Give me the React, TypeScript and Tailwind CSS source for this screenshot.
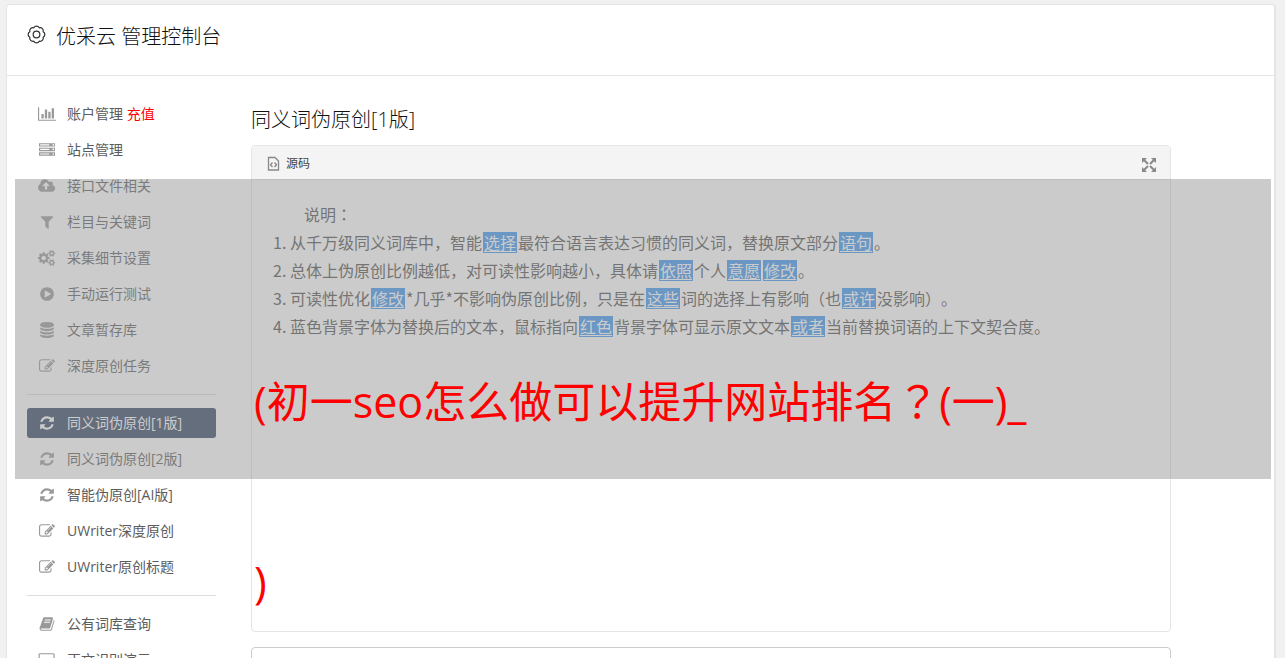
import React from "react";

type IconData = { w: number; d: string };

const icons: Record<string, IconData> = {
  chart: { w: 2048, d: "M640 896v512h-256v-512h256zm384-512v1024h-256v-1024h256zm1024 1152v128h-2048v-1536h128v1408h1920zm-640-896v768h-256v-768h256zm384-384v1152h-256v-1152h256z" },
  server: { w: 1792, d: "M128 1408h1024v-128h-1024v128zm0-512h1024v-128h-1024v128zm1568 448q0-40-28-68t-68-28-68 28-28 68 28 68 68 28 68-28 28-68zm-1568-960h1024v-128h-1024v128zm1568 448q0-40-28-68t-68-28-68 28-28 68 28 68 68 28 68-28 28-68zm0-512q0-40-28-68t-68-28-68 28-28 68 28 68 68 28 68-28 28-68zm96 832v384h-1792v-384h1792zm0-512v384h-1792v-384h1792zm0-512v384h-1792v-384h1792z" },
  cloud: { w: 1920, d: "M1280 864q0-14-9-23l-352-352q-9-9-23-9t-23 9l-351 351q-10 12-10 24 0 14 9 23t23 9h224v352q0 13 9.5 22.5t22.5 9.5h192q13 0 22.5-9.5t9.5-22.5v-352h224q13 0 22.5-9.5t9.5-22.5zm640 288q0 159-112.5 271.5t-271.5 112.5h-1088q-185 0-316.5-131.5t-131.5-316.5q0-130 70-240t188-165q-2-30-2-43 0-212 150-362t362-150q156 0 285.5 87t188.5 231q71-62 166-62 106 0 181 75t75 181q0 76-41 138 130 31 213.5 135.5t83.5 238.5z" },
  filter: { w: 1792, d: "M1595 295q17 41-14 70l-493 493v742q0 42-39 59-13 5-25 5-27 0-45-19l-256-256q-19-19-19-45v-486l-493-493q-31-29-14-70 17-39 59-39h1280q42 0 59 39z" },
  cogs: { w: 1920, d: "M896 896q0-106-75-181t-181-75-181 75-75 181 75 181 181 75 181-75 75-181zm768 512q0-52-38-90t-90-38-90 38-38 90q0 53 37.5 90.5t90.5 37.5 90.5-37.5 37.5-90.5zm0-1024q0-52-38-90t-90-38-90 38-38 90q0 53 37.5 90.5t90.5 37.5 90.5-37.5 37.5-90.5zm-384 421v185q0 10-7 19.5t-16 10.5l-155 24q-11 35-32 76 34 48 90 115 7 11 7 20 0 12-7 19-23 30-82.5 89.5t-78.5 59.5q-11 0-21-7l-115-90q-37 19-77 31-11 108-23 155-7 24-30 24h-186q-11 0-20-7.5t-10-17.5l-23-153q-34-10-75-31l-118 89q-7 7-20 7-11 0-21-8-144-133-144-160 0-9 7-19 10-14 41-53t47-61q-23-44-35-82l-152-24q-10-1-17-9.5t-7-19.5v-185q0-10 7-19.5t16-10.5l155-24q11-35 32-76-34-48-90-115-7-11-7-20 0-12 7-20 22-30 82-89t79-59q11 0 21 7l115 90q34-18 77-32 11-108 23-154 7-24 30-24h186q11 0 20 7.5t10 17.5l23 153q34 10 75 31l118-89q8-7 20-7 11 0 21 8 144 133 144 160 0 8-7 19-12 16-42 54t-45 60q23 48 34 82l152 23q10 2 17 10.5t7 19.5zm640 533v140q0 16-149 31-12 27-30 52 51 113 51 138 0 4-4 7-122 71-124 71-8 0-46-47t-52-68q-20 2-30 2t-30-2q-14 21-52 68t-46 47q-2 0-124-71-4-3-4-7 0-25 51-138-18-25-30-52-149-15-149-31v-140q0-16 149-31 13-29 30-52-51-113-51-138 0-4 4-7 4-2 35-20t59-34 30-16q8 0 46 46.5t52 67.5q20-2 30-2t30 2q51-71 92-112l6-2q4 0 124 70 4 3 4 7 0 25-51 138 17 23 30 52 149 15 149 31zm0-1024v140q0 16-149 31-12 27-30 52 51 113 51 138 0 4-4 7-122 71-124 71-8 0-46-47t-52-68q-20 2-30 2t-30-2q-14 21-52 68t-46 47q-2 0-124-71-4-3-4-7 0-25 51-138-18-25-30-52-149-15-149-31v-140q0-16 149-31 13-29 30-52-51-113-51-138 0-4 4-7 4-2 35-20t59-34 30-16q8 0 46 46.5t52 67.5q20-2 30-2t30 2q51-71 92-112l6-2q4 0 124 70 4 3 4 7 0 25-51 138 17 23 30 52 149 15 149 31z" },
  play: { w: 1792, d: "M896 128q209 0 385.5 103t279.5 279.5 103 385.5-103 385.5-279.5 279.5-385.5 103-385.5-103-279.5-279.5-103-385.5 103-385.5 279.5-279.5 385.5-103zm384 823q32-18 32-55t-32-55l-544-320q-31-19-64-1-32 19-32 56v640q0 37 32 56 16 8 32 8 17 0 32-9z" },
  database: { w: 1792, d: "M896 768q237 0 443-43t325-127v170q0 69-103 128t-280 93.5-385 34.5-385-34.5-280-93.5-103-128v-170q119 84 325 127t443 43zm0 768q237 0 443-43t325-127v170q0 69-103 128t-280 93.5-385 34.5-385-34.5-280-93.5-103-128v-170q119 84 325 127t443 43zm0-384q237 0 443-43t325-127v170q0 69-103 128t-280 93.5-385 34.5-385-34.5-280-93.5-103-128v-170q119 84 325 127t443 43zm0-1152q208 0 385 34.5t280 93.5 103 128v128q0 69-103 128t-280 93.5-385 34.5-385-34.5-280-93.5-103-128v-128q0-69 103-128t280-93.5 385-34.5z" },
  edit: { w: 1792, d: "M888 1184l116-116-152-152-116 116v56h96v96h56zm440-720q-16-16-33 1l-350 350q-17 17-1 33t33-1l350-350q17-17 1-33zm80 594v190q0 119-84.5 203.5t-203.5 84.5h-832q-119 0-203.5-84.5t-84.5-203.5v-832q0-119 84.5-203.5t203.5-84.5h832q63 0 117 25 15 7 18 23 3 17-9 29l-49 49q-14 14-32 8-23-6-45-6h-832q-66 0-113 47t-47 113v832q0 66 47 113t113 47h832q66 0 113-47t47-113v-126q0-13 9-22l64-64q15-15 35-7t20 29zm-96-738l288 288-672 672h-288v-288zm444 132l-92 92-288-288 92-92q28-28 68-28t68 28l152 152q28 28 28 68t-28 68z" },
  refresh: { w: 1792, d: "M1639 1056q0 5-1 7-64 268-268 434.5t-478 166.5q-146 0-282.5-55t-243.5-157l-129 129q-19 19-45 19t-45-19-19-45v-448q0-26 19-45t45-19h448q26 0 45 19t19 45-19 45l-137 137q71 66 161 102t187 36q134 0 250-65t186-179q11-17 53-117 8-23 30-23h192q13 0 22.5 9.5t9.5 22.5zm25-800v448q0 26-19 45t-45 19h-448q-26 0-45-19t-19-45 19-45l138-138q-148-137-349-137-134 0-250 65t-186 179q-11 17-53 117-8 23-30 23h-199q-13 0-22.5-9.5t-9.5-22.5v-7q65-268 270-434.5t480-166.5q146 0 284 55.5t245 156.5l130-129q19-19 45-19t45 19 19 45z" },
  book: { w: 1792, d: "M1703 478q40 57 18 129l-275 906q-19 64-76.5 107.5t-122.5 43.5h-923q-77 0-148.5-53.5t-99.5-131.5q-24-67-2-127 0-4 3-27t4-37q1-8-3-21.5t-3-19.5q2-11 8-21t16.5-23.5 16.5-23.5q23-38 45-91.5t30-91.5q3-10 .5-30t-.5-28q3-11 17-28t17-23q21-36 42-92t25-90q1-9-2.5-32t.5-28q4-13 22-30.5t22-22.5q19-26 42.5-84.5t27.5-96.5q1-8-3-25.5t-2-26.5q2-8 9-18t18-23 17-21q8-12 16.5-30.5t15-35 16-36 19.5-32 26.5-23.5 36-11.5 47.5 5.5l-1 3q38-9 51-9h761q74 0 114 56t18 130l-274 906q-36 119-71.5 153.5t-128.5 34.5h-869q-27 0-38 15-11 16-1 43 24 70 144 70h923q29 0 56-15.5t35-41.5l300-987q7-22 5-57 38 15 59 43zm-1064 2q-4 13 2 22.5t20 9.5h608q13 0 25.5-9.5t16.5-22.5l21-64q4-13-2-22.5t-20-9.5h-608q-13 0-25.5 9.5t-16.5 22.5zm-83 256q-4 13 2 22.5t20 9.5h608q13 0 25.5-9.5t16.5-22.5l21-64q4-13-2-22.5t-20-9.5h-608q-13 0-25.5 9.5t-16.5 22.5z" },
  laptop: { w: 1920, d: "M224 1280q-66 0-113-47t-47-113v-832q0-66 47-113t113-47h1472q66 0 113 47t47 113v832q0 66-47 113t-113 47h-1472zm-32-992v832q0 13 9.500 22.500t22.500 9.500h1472q13 0 22.500-9.500t9.500-22.500v-832q0-13-9.500-22.500t-22.500-9.500h-1472q-13 0-22.500 9.500t-9.500 22.500zm1568 1056h160v96q0 40-47 68t-113 28h-1600q-66 0-113-28t-47-68v-96h1760z" },
};

function MenuIcon({ name }: { name: string }) {
  const icon = icons[name];
  return (
    <span className="flex w-5 shrink-0 justify-center">
      <svg className="h-4 w-auto shrink-0" viewBox={`0 0 ${icon.w} 1792`} fill="currentColor" aria-hidden="true">
        <path d={icon.d} />
      </svg>
    </span>
  );
}

type Item = { icon: string; label: string; note?: string; active?: boolean };

const groups: Item[][] = [
  [
    { icon: "chart", label: "账户管理", note: "充值" },
    { icon: "server", label: "站点管理" },
    { icon: "cloud", label: "接口文件相关" },
    { icon: "filter", label: "栏目与关键词" },
    { icon: "cogs", label: "采集细节设置" },
    { icon: "play", label: "手动运行测试" },
    { icon: "database", label: "文章暂存库" },
    { icon: "edit", label: "深度原创任务" },
  ],
  [
    { icon: "refresh", label: "同义词伪原创[1版]", active: true },
    { icon: "refresh", label: "同义词伪原创[2版]" },
    { icon: "refresh", label: "智能伪原创[AI版]" },
    { icon: "edit", label: "UWriter深度原创" },
    { icon: "edit", label: "UWriter原创标题" },
  ],
  [
    { icon: "book", label: "公有词库查询" },
    { icon: "laptop", label: "正文识别演示" },
  ],
];

function MenuLink({ item }: { item: Item }) {
  return (
    <li>
      <a
        href="#"
        className={
          item.active
            ? "flex h-[30px] items-center gap-[10px] rounded-[3px] bg-[#334461] px-[10px] text-sm text-white"
            : "flex h-[30px] items-center gap-[10px] rounded-[3px] px-[10px] text-sm text-[#5c5c5c]"
        }
      >
        <span className={item.active ? "text-white" : "text-[#999]"}>
          <MenuIcon name={item.icon} />
        </span>
        <span>
          {item.label}
          {item.note && <span className="text-[#f00]"> {item.note}</span>}
        </span>
      </a>
    </li>
  );
}

function Mark({ children }: { children: React.ReactNode }) {
  return <span className="mx-px inline-block h-[21px] bg-[#3d96f0] px-px leading-[21px] text-white underline underline-offset-2">{children}</span>;
}

function CenteredPunctuation({ children }: { children: React.ReactNode }) {
  return <span className="font-['Noto_Sans_CJK_TC',sans-serif]">{children}</span>;
}

export default function App() {
  return (
    <div className="relative h-screen overflow-hidden bg-[#f1f1f1] px-[6px] pt-1 pr-[9px] font-['Open_Sans','Noto_Sans_CJK_SC',sans-serif] text-[#333] [text-spacing-trim:space-all]">
      <div className="min-h-full rounded-t-[4px] border border-r-2 border-[#e5e5e5] bg-white">
        <header className="flex h-[71px] items-start gap-[10px] border-b border-[#e5e5e5] pt-4 pl-5">
          <svg className="mt-1 h-[19px] w-[19px]" viewBox="0 0 20 20" fill="none" stroke="#333" strokeWidth="1.3" strokeLinejoin="round" aria-hidden="true">
            <path d="M7.090 2.980A3.300 3.300 0 0 1 12.910 2.980A3.300 3.300 0 0 1 17.020 7.090A3.300 3.300 0 0 1 17.020 12.910A3.300 3.300 0 0 1 12.910 17.020A3.300 3.300 0 0 1 7.090 17.020A3.300 3.300 0 0 1 2.980 12.910A3.300 3.300 0 0 1 2.980 7.090A3.300 3.300 0 0 1 7.090 2.980Z" />
            <circle cx="10" cy="10" r="3.5" />
          </svg>
          <h1 className="text-xl leading-8 font-light text-[#111]">优采云 管理控制台</h1>
        </header>
        <div className="flex items-start">
          <nav className="w-[229px] shrink-0 pt-[23px] pl-5" aria-label="主菜单">
            {groups.map((group, index) => (
              <ul
                key={index}
                className={index ? "mt-[13px] flex w-[189px] flex-col gap-[6px] border-t border-[#ddd] pt-[13px]" : "flex w-[189px] flex-col gap-[6px]"}
              >
                {group.map((item) => (
                  <MenuLink key={item.label} item={item} />
                ))}
              </ul>
            ))}
          </nav>
          <main className="mr-[103px] ml-[15px] min-w-0 flex-1 pt-7">
            <h2 className="text-xl leading-8 font-light text-[#111]">同义词伪原创[1版]</h2>
            <section className="mt-[9px] h-[487px] rounded-[4px] border border-[#e5e5e5]">
              <div className="flex h-[34px] items-center justify-between rounded-t-[3px] border-b border-[#e5e5e5] bg-[#f4f4f4] px-[14px]">
                <button type="button" className="flex items-center gap-[6px] pt-[2px] text-xs text-[#444]">
                  <svg className="h-[15px] w-[14px]" viewBox="0 0 14 15" fill="none" stroke="#888" strokeWidth="1.3" aria-hidden="true">
                    <path d="M2.500 1.500H9L12.500 5V14H2.500Z" />
                    <path d="M6.500 6.500L4.500 8.700L6.500 11M8.500 6.500L10.500 8.700L8.500 11" />
                  </svg>
                  源码
                </button>
                <button type="button" aria-label="全屏" className="mt-1">
                  <svg className="h-[14px] w-[14px]" viewBox="0 0 14 14" fill="#888" stroke="#888" strokeWidth="2" aria-hidden="true">
                    <path stroke="none" d="M0 0H5L0 5ZM14 0V5L9 0ZM0 14V9L5 14ZM14 14H9L14 9Z" />
                    <path d="M2 2L6 6M12 2L8 6M2 12L6 8M12 12L8 8" />
                  </svg>
                </button>
              </div>
              <div className="pt-5 pl-5 font-['Noto_Sans_CJK_SC',sans-serif] text-base leading-7 text-[#505050]">
                <p className="pl-8">
                  说明<CenteredPunctuation>：</CenteredPunctuation>
                </p>
                <ol className="list-inside list-decimal pl-px">
                  <li>从千万级同义词库中，智能<Mark>选择</Mark>最符合语言表达习惯的同义词，替换原文部分<Mark>语句</Mark>。</li>
                  <li>总体上伪原创比例越低，对可读性影响越小，具体请<Mark>依照</Mark>个人<Mark>意愿</Mark><Mark>修改</Mark>。</li>
                  <li>可读性优化<Mark>修改</Mark>*几乎*不影响伪原创比例，只是在<Mark>这些</Mark>词的选择上有影响（也<Mark>或许</Mark>没影响）。</li>
                  <li>蓝色背景字体为替换后的文本，鼠标指向<Mark>红色</Mark>背景字体可显示原文文本<Mark>或者</Mark>当前替换词语的上下文契合度。</li>
                </ol>
              </div>
            </section>
            <textarea aria-label="正文" className="mt-[15px] block h-40 w-full resize-none rounded-[4px] border border-[#ccc] bg-white" />
          </main>
        </div>
      </div>
      <div className="absolute top-[179px] right-[14px] left-[15px] h-[300px] bg-[#979797]/50" />
      <p className="absolute top-[309px] right-[230px] left-[254px] text-[43px] leading-[180px] text-[#f00]">
        (初一seo怎么做可以提升网站排名<CenteredPunctuation>？</CenteredPunctuation>(一)_<br />)
      </p>
    </div>
  );
}
